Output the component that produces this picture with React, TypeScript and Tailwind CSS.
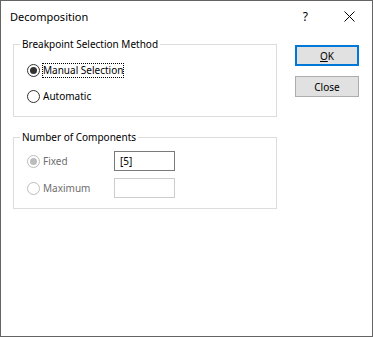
function Radio({ checked, disabled }: { checked?: boolean; disabled?: boolean }) {
  const stroke = disabled ? "#bcbcbc" : "#333333";
  const dot = disabled ? "#bcbcbc" : "#333333";
  return (
    <svg width="13" height="13" viewBox="0 0 13 13" className="shrink-0 block">
      <circle cx="6.5" cy="6.5" r="6" fill="#ffffff" stroke={stroke} strokeWidth="1" />
      {checked && <circle cx="6.5" cy="6.5" r="3.5" fill={dot} />}
    </svg>
  );
}

function Group({ title, children, className }: { title: string; children: React.ReactNode; className?: string }) {
  return (
    <div className={"relative border border-[#dcdcdc] w-[264px] " + (className ?? "")}>
      <span className="absolute left-[6px] -top-[8px] bg-white px-[2px] leading-[14px] text-[#000000]">{title}</span>
      {children}
    </div>
  );
}

export default function App() {
  return (
    <div
      className="w-[373px] h-[337px] bg-white border border-[#646464] flex flex-col text-[10px] text-black"
      style={{ fontFamily: '"Noto Sans", sans-serif' }}
    >
      <div className="h-[31px] flex items-center pl-[9px] shrink-0">
        <span className="text-[11px] leading-none">Decomposition</span>
        <span className="ml-auto text-[12px] leading-none mr-[36px]">?</span>
        <svg width="11" height="11" viewBox="0 0 11 11" className="mr-[17px]">
          <path d="M0.5 0.5 L10.5 10.5 M10.5 0.5 L0.5 10.5" stroke="#000" strokeWidth="1" />
        </svg>
      </div>
      <div className="flex pl-[12px] pt-[12px]">
        <div className="flex flex-col">
          <Group title="Breakpoint Selection Method" className="h-[73px]">
            <div className="flex flex-col pl-[13px] pt-[17px] gap-[10px]">
              <div className="flex items-center h-[16px]">
                <Radio checked />
                <span className="ml-[2px] border border-dotted border-black px-0 leading-[13px]">Manual Selection</span>
              </div>
              <div className="flex items-center h-[16px]">
                <Radio />
                <span className="ml-[3px] leading-[13px]">Automatic</span>
              </div>
            </div>
          </Group>
          <Group title="Number of Components" className="h-[72px] mt-[20px]">
            <div className="flex flex-col pl-[13px] pt-[13px] gap-[7px]">
              <div className="flex items-center h-[20px]">
                <Radio checked disabled />
                <span className="ml-[3px] text-[#6d6d6d] w-[71px]">Fixed</span>
                <div className="w-[61px] h-[20px] border border-[#7a7a7a] flex items-center pl-[5px] text-[10px]">[5]</div>
              </div>
              <div className="flex items-center h-[20px]">
                <Radio disabled />
                <span className="ml-[3px] text-[#6d6d6d] w-[71px]">Maximum</span>
                <div className="w-[61px] h-[20px] border border-[#cccccc]" />
              </div>
            </div>
          </Group>
        </div>
        <div className="flex flex-col ml-[18px] pt-[1px] gap-[10px]">
          <button className="w-[64px] h-[21px] bg-[#e1e1e1] border-2 border-[#0078d7] flex items-center justify-center leading-none">
            <span><span className="underline">O</span>K</span>
          </button>
          <button className="w-[64px] h-[21px] bg-[#e1e1e1] border border-[#adadad] flex items-center justify-center leading-none">
            Close
          </button>
        </div>
      </div>
    </div>
  );
}
